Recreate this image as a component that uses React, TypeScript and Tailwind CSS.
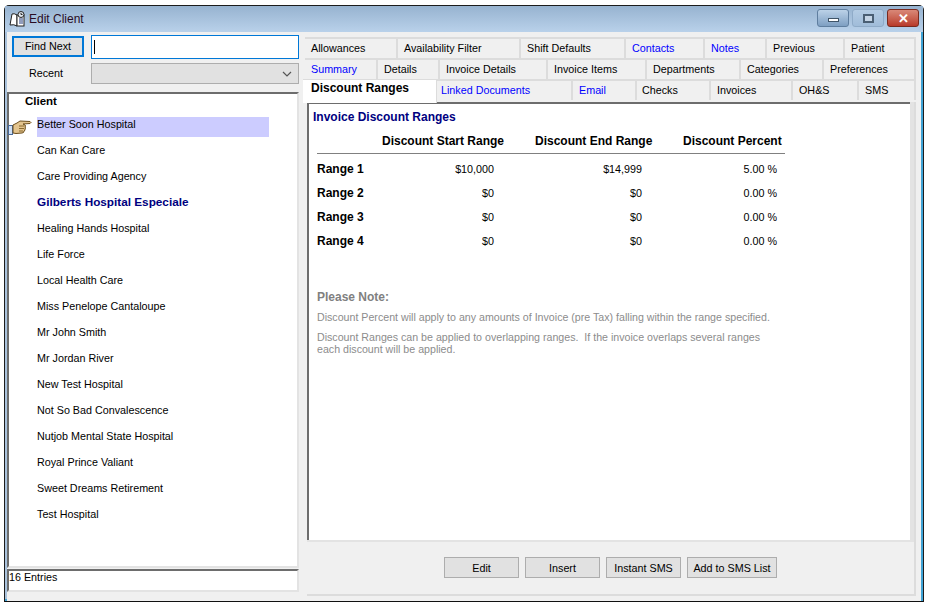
const clients = [
  "Better Soon Hospital",
  "Can Kan Care",
  "Care Providing Agency",
  "Gilberts Hospital Especiale",
  "Healing Hands Hospital",
  "Life Force",
  "Local Health Care",
  "Miss Penelope Cantaloupe",
  "Mr John Smith",
  "Mr Jordan River",
  "New Test Hospital",
  "Not So Bad Convalescence",
  "Nutjob Mental State Hospital",
  "Royal Prince Valiant",
  "Sweet Dreams Retirement",
  "Test Hospital",
];

type Tab = { label: string; width: string; blue?: boolean; pad?: string };

const row1: Tab[] = [
  { label: "Allowances", width: "w-[93px]" },
  { label: "Availability Filter", width: "w-[123px]" },
  { label: "Shift Defaults", width: "w-[105px]" },
  { label: "Contacts", width: "w-[79px]", blue: true },
  { label: "Notes", width: "w-[62px]", blue: true },
  { label: "Previous", width: "w-[78px]" },
  { label: "Patient", width: "w-[71px]" },
];

const row2: Tab[] = [
  { label: "Summary", width: "w-[73px]", blue: true },
  { label: "Details", width: "w-[62px]" },
  { label: "Invoice Details", width: "w-[108px]" },
  { label: "Invoice Items", width: "w-[99px]" },
  { label: "Departments", width: "w-[94px]" },
  { label: "Categories", width: "w-[83px]" },
  { label: "Preferences", width: "w-[92px]" },
];

const row3: Tab[] = [
  { label: "Linked Documents", width: "w-[136px]", blue: true, pad: "pl-[4px]" },
  { label: "Email", width: "w-[64px]", blue: true },
  { label: "Checks", width: "w-[74px]", pad: "pl-[5px]" },
  { label: "Invoices", width: "w-[82px]" },
  { label: "OH&S", width: "w-[66px]" },
  { label: "SMS", width: "w-[57px]" },
];

const ranges = [
  { name: "Range 1", start: "$10,000", end: "$14,999", pct: "5.00 %" },
  { name: "Range 2", start: "$0", end: "$0", pct: "0.00 %" },
  { name: "Range 3", start: "$0", end: "$0", pct: "0.00 %" },
  { name: "Range 4", start: "$0", end: "$0", pct: "0.00 %" },
];

const TabRow = ({ tabs }: { tabs: Tab[] }) => (
  <div className="flex h-[21px]">
    {tabs.map((tab) => (
      <div
        key={tab.label}
        className={`${tab.width} ${tab.pad ?? "pl-[6px]"} h-full shrink-0 border-r-2 border-t-2 border-[#dcdcdc] leading-[18px] ${tab.blue ? "text-[#0000ff]" : "text-black"}`}
      >
        {tab.label}
      </div>
    ))}
  </div>
);

const BarButton = ({ label, width }: { label: string; width: string }) => (
  <div className={`${width} h-[21px] border border-[#adadad] bg-[#e1e1e1] text-center leading-[20px] text-black`}>
    {label}
  </div>
);

const BookIcon = () => (
  <svg width="17" height="16" viewBox="0 0 17 16" className="shrink-0">
    <path d="M1 14 L3 3 Q5 2 8 4 L8 15 Q5 13 1 14 Z" fill="#fff" stroke="#222" strokeWidth="1" />
    <rect x="8" y="4" width="7" height="11" fill="#fff" stroke="#222" />
    <circle cx="12" cy="3.5" r="3" fill="#dfe6ee" stroke="#222" />
    <path d="M12 2 V3.5 H13.5" stroke="#222" fill="none" />
    <path d="M10 8 H14 M10 10 H14 M10 12 H14" stroke="#223a7a" />
  </svg>
);

const HandIcon = () => (
  <svg width="24" height="18" viewBox="0 0 24 18">
    <rect x="0.5" y="7.5" width="4" height="9" fill="#cfe0f5" stroke="#4a6a9a" />
    <path
      d="M5 7 L9 5 L12 3 L22 3.5 Q24 4.5 22 5.5 L15 6 L17 7 Q18 8 17 9 Q18 10 17 11 Q17.5 12.5 16 13 Q16 15 14 15 L8 15.5 L5 15 Z"
      fill="#e3c48e"
      stroke="#6b4d1c"
      strokeWidth="1"
    />
    <path d="M11 8 H16 M11 10.5 H16 M11 13 H15" stroke="#8a6a30" />
  </svg>
);

const App = () => {
  return (
    <div className="h-[609px] w-[933px] overflow-hidden bg-white pl-[4px] pt-[5px] font-['Liberation_Sans',Arial,sans-serif] text-[10.75px] text-black">
      <div className="flex h-[597px] w-[920px] flex-col rounded-t-[5px] border border-[#1c1c1c] border-b-[#101010] bg-[#a9c2dc] shadow-[inset_-2px_-2px_0_#3fa3d6]">
        {/* title bar */}
        <div className="flex h-[26px] shrink-0 items-center bg-gradient-to-b from-[#97b3d0] to-[#b9d1ea] pl-[4px] pr-[4px]">
          <BookIcon />
          <span className="ml-[3px] text-[12px] text-[#2a0d24]">Edit Client</span>
          <div className="ml-auto flex gap-[3px] pb-[2px]">
            <div className="flex h-[18px] w-[32px] items-center justify-center rounded-[3px] border border-[#5f7e9f] bg-gradient-to-b from-[#bcd2e8] to-[#7e9fc2]">
              <div className="mt-[3px] h-[4px] w-[11px] border border-[#3f5468] bg-white" />
            </div>
            <div className="flex h-[18px] w-[32px] items-center justify-center rounded-[3px] border border-[#8fabc8] bg-gradient-to-b from-[#b4cce4] to-[#a0bcd9]">
              <div className="h-[9px] w-[11px] border-2 border-[#4a5f74] bg-[#c5d5e6]" />
            </div>
            <div className="flex h-[18px] w-[32px] items-center justify-center rounded-[3px] border border-[#7a2a1e] bg-gradient-to-b from-[#d98878] to-[#b8392a] text-[13px] font-bold leading-none text-white">
              ✕
            </div>
          </div>
        </div>

        {/* body */}
        <div className="mx-[2px] flex min-h-0 flex-1 bg-[#f0f0f0]">
          {/* left column */}
          <div className="flex w-[295px] shrink-0 flex-col">
            <div className="flex h-[31px] shrink-0 items-start pt-[3px]">
              <div className="ml-[5px] mt-[1px] h-[21px] w-[72px] border-2 border-[#0078d7] bg-[#e1e1e1] text-center leading-[17px]">
                Find Next
              </div>
              <div className="ml-[7px] flex h-[24px] w-[208px] items-center border border-[#0078d7] bg-white pl-[2px]">
                <div className="h-[14px] w-px bg-black" />
              </div>
            </div>
            <div className="flex h-[22px] shrink-0 items-start">
              <div className="w-[84px] pl-[22px] leading-[21px]">Recent</div>
              <div className="flex h-[21px] w-[208px] items-center justify-end border border-[#adadad] bg-[#e1e1e1] pr-[6px]">
                <svg width="10" height="6" viewBox="0 0 10 6">
                  <path d="M1 1 L5 5 L9 1" fill="none" stroke="#555" strokeWidth="1.2" />
                </svg>
              </div>
            </div>
            <div className="flex min-h-0 flex-1 flex-col pb-[9px] pt-[7px]">
              <div className="h-[476px] w-[292px] shrink-0 border-l-2 border-t-2 border-l-[#6d6d6d] border-t-[#6d6d6d] border-b-2 border-r-2 border-b-[#e3e3e3] border-r-[#e3e3e3] bg-white">
                <div className="pl-[16px] text-[11.5px] font-bold leading-[14px]">Client</div>
                <div className="pt-[9px]">
                  {clients.map((name, i) => (
                    <div key={name} className="relative h-[26px] pl-[28px]">
                      {i === 0 && (
                        <div className="absolute left-[-1px] top-[1px]">
                          <HandIcon />
                        </div>
                      )}
                      <div
                        className={`h-[20px] w-[232px] leading-[14px] ${i === 0 ? "bg-[#ccccff]" : ""} ${i === 3 ? "text-[11.75px] font-bold text-[#000080]" : ""}`}
                      >
                        {name}
                      </div>
                    </div>
                  ))}
                </div>
              </div>
              <div className="mt-[1px] h-[23px] w-[292px] shrink-0 border-l-2 border-t-2 border-l-[#6d6d6d] border-t-[#6d6d6d] border-b-2 border-r-2 border-b-[#e3e3e3] border-r-[#e3e3e3] bg-white leading-[13px]">
                16 Entries
              </div>
            </div>
          </div>

          {/* right column */}
          <div className="ml-[3px] flex w-[613px] shrink-0 flex-col pt-[5px]">
            <TabRow tabs={row1} />
            <TabRow tabs={row2} />
            <div className="relative flex h-[21px]">
              <div className="relative z-10 -ml-[2px] h-[24px] w-[134px] shrink-0 border-r border-t border-[#dcdcdc] bg-white pl-[8px] text-[12px] font-bold leading-[16px]">
                Discount Ranges
              </div>
              <TabRow tabs={row3} />
            </div>

            <div className="ml-[2px] mt-[2px] flex h-[494px] w-[609px] flex-col border-b-2 border-r-2 border-[#dcdcdc]">
              <div className="h-[440px] border-b-2 border-r-4 border-[#e3e3e3] bg-white">
                <div className="h-full w-full border-l-2 border-t-2 border-[#6d6d6d] bg-white pl-[4px] font-bold">
                  <div className="pt-[5px] text-[12px] leading-[16px] text-[#000080]">Invoice Discount Ranges</div>
                  <div className="ml-[4px] mt-[8px] flex h-[21px] w-[468px] border-b border-[#808080] pl-[65px] text-[12px] leading-[16px]">
                    <div className="w-[153px]">Discount Start Range</div>
                    <div className="w-[148px]">Discount End Range</div>
                    <div>Discount Percent</div>
                  </div>
                  <div className="ml-[4px] pt-[3px]">
                    {ranges.map((range) => (
                      <div key={range.name} className="flex h-[24px] items-center">
                        <div className="w-[65px] text-[12px]">{range.name}</div>
                        <div className="w-[112px] text-right font-normal">{range.start}</div>
                        <div className="w-[148px] text-right font-normal">{range.end}</div>
                        <div className="w-[135px] text-right font-normal">{range.pct}</div>
                      </div>
                    ))}
                  </div>
                  <div className="ml-[4px] mt-[37px] w-[455px] font-normal leading-[12px] text-[#8c8c8c]">
                    <div className="text-[12px] font-bold leading-[14px] text-[#808080]">Please Note:</div>
                    <div className="mt-[7px] whitespace-nowrap text-[10.65px]">
                      Discount Percent will apply to any amounts of Invoice (pre Tax) falling within the range specified.
                    </div>
                    <div className="mt-[8px] text-[10.65px]">
                      Discount Ranges can be applied to overlapping ranges.&nbsp; If the invoice overlaps several ranges each discount will be applied.
                    </div>
                  </div>
                </div>
              </div>
              <div className="flex flex-1 justify-start gap-[6px] pl-[137px] pt-[15px]">
                <BarButton label="Edit" width="w-[75px]" />
                <BarButton label="Insert" width="w-[75px]" />
                <BarButton label="Instant SMS" width="w-[75px]" />
                <BarButton label="Add to SMS List" width="w-[90px]" />
              </div>
            </div>
          </div>
        </div>
        <div className="mx-[2px] h-[3px] shrink-0 bg-[#f0f0f0]" />
      </div>
    </div>
  );
};

export default App;
